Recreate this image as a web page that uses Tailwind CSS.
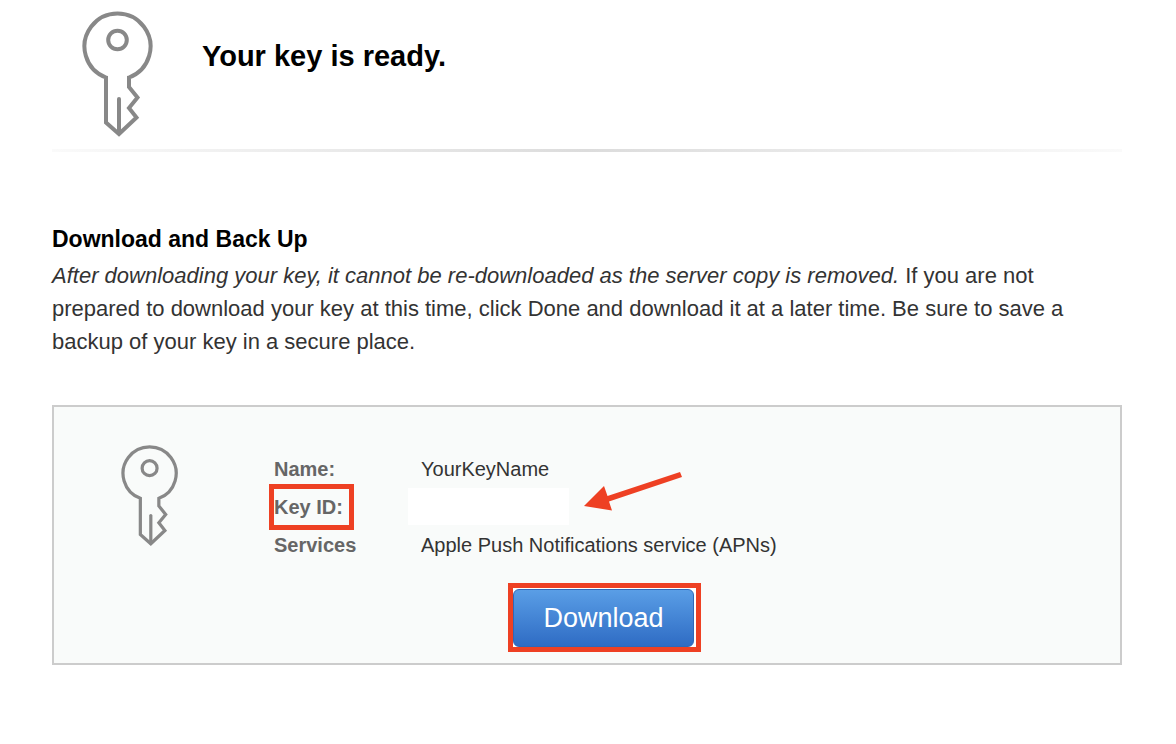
<!DOCTYPE html>
<html lang="en">
<head>
  <meta charset="UTF-8" />
  <meta name="viewport" content="width=device-width, initial-scale=1" />
  <title>Your key is ready</title>
  <script src="https://cdn.jsdelivr.net/npm/@tailwindcss/browser@4"></script>
</head>
<body class="bg-white font-['Liberation_Sans',Arial,sans-serif] text-[#333333]">

  <!-- Key outline, used in the header and in the card -->
  <svg class="hidden">
    <symbol id="key" viewBox="0 0 72 128">
      <g fill="none" stroke="#888888" stroke-width="4">
        <path d="M47 77 V67.500 A33 33 0 1 0 24 67.500 V112.500 L37 124 L54.500 107.500 L47 98 L55.500 87.500 L47 77 V66.500" />
        <path d="M37 89 V123" stroke-linecap="round" />
        <circle cx="35.5" cy="30" r="9.300" />
      </g>
    </symbol>
  </svg>

  <main class="pl-[52px] pr-[54px] pb-20">
    <header class="flex items-start pt-[10px] pl-[30px]">
      <svg class="w-[72px] h-[128px] shrink-0" aria-hidden="true"><use href="#key" /></svg>
      <h1 class="ml-12 mt-[26px] text-[29px] leading-10 font-bold text-black">Your key is ready.</h1>
    </header>
    <div class="mt-[11px] h-[3px] bg-linear-to-r from-[#fafafa] via-[#dcdcdc] to-[#fafafa]"></div>

    <section class="mt-[71px]">
      <h2 class="text-[23px] leading-8 font-bold text-black">Download and Back Up</h2>
      <p class="mt-1 text-[22px] leading-[33px]">
        <em>After downloading your key, it cannot be re-downloaded as the server copy is removed.</em>
        If you are not prepared to download your key at this time, click Done and download it at a later time. Be sure to save a backup of your key in a secure place.
      </p>
    </section>

    <section class="mt-[47px] flex items-start border-2 border-[#cccccc] bg-[#f9fbfa] pt-[37px] pb-[11px] pl-[67px]">
      <svg class="w-[58px] h-[103px] shrink-0" aria-hidden="true"><use href="#key" /></svg>
      <div class="ml-[95px] mt-[6px]">
        <dl class="grid grid-cols-[147px_auto] text-[20px] leading-[38px]">
          <dt class="font-bold text-[#666666]">Name:</dt>
          <dd>YourKeyName</dd>
          <dt class="relative font-bold text-[#666666]">
            Key ID:
            <span class="absolute -left-[5px] -top-1 h-[46px] w-[85px] border-5 border-[#ee4023]"></span>
          </dt>
          <dd class="relative">
            <div class="-ml-[13px] h-[37px] w-[161px] bg-white"></div>
            <!-- Arrow to the key ID -->
            <svg class="absolute left-[162px] -top-4 h-10 w-[100px]" viewBox="0 0 100 40" fill="#ee4023" aria-hidden="true">
              <path d="M1 34 L21 14 L24.500 24 L97 0 L99 5 L26 29.500 L29 38.500 Z" />
            </svg>
          </dd>
          <dt class="font-bold text-[#666666]">Services</dt>
          <dd>Apple Push Notifications service (APNs)</dd>
        </dl>
        <div class="mt-[19px] ml-[234px] w-[193px] border-5 border-[#ee4023] bg-white pt-px pr-[2px]">
          <button type="button" class="block h-[58px] w-full rounded-md border border-[#2f68b8] bg-linear-to-b from-[#5a9ee6] to-[#2f6cc4] text-[27px] leading-8 text-white">Download</button>
        </div>
      </div>
    </section>
  </main>

</body>
</html>
